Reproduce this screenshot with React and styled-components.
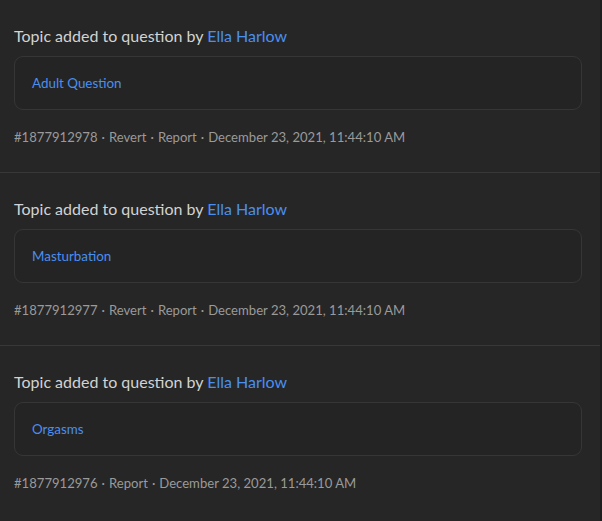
import React from "react";
import styled, { createGlobalStyle } from "styled-components";

const GlobalStyle = createGlobalStyle`
  html, body {
    margin: 0;
    padding: 0;
    background: #262626;
  }
  body {
    font-family: Lato, "Noto Sans", sans-serif;
    -webkit-font-smoothing: antialiased;
  }
`;

const logs = [
  { id: "1877912978", topic: "Adult Question", canRevert: true },
  { id: "1877912977", topic: "Masturbation", canRevert: true },
  { id: "1877912976", topic: "Orgasms", canRevert: false },
];

const DATE = "December 23, 2021, 11:44:10 AM";

export default function App() {
  return (
    <>
      <GlobalStyle />
      <Page>
        <List>
          {logs.map((log, i) => (
            <Entry key={log.id} last={i === logs.length - 1}>
              <Heading>
                Topic added to question by <UserLink href="#">Ella Harlow</UserLink>
              </Heading>
              <TopicCard>
                <TopicLink href="#">{log.topic}</TopicLink>
              </TopicCard>
              <Meta>
                #{log.id}
                {log.canRevert && (
                  <>
                    <Dot>·</Dot>
                    <MetaLink href="#">Revert</MetaLink>
                  </>
                )}
                <Dot>·</Dot>
                <MetaLink href="#">Report</MetaLink>
                <Dot>·</Dot>
                {DATE}
              </Meta>
            </Entry>
          ))}
        </List>
        <Edge />
      </Page>
    </>
  );
}

const Page = styled.div`
  display: flex;
  width: 602px;
  height: 521px;
  overflow: hidden;
  background: #262626;
`;

const List = styled.div`
  flex: 1;
  display: flex;
  flex-direction: column;
`;

const Edge = styled.div`
  width: 2px;
  background: #1e1e1e;
`;

const Entry = styled.div`
  padding: 25px 18px 25px 14px;
  border-bottom: ${({ last }) => (last ? "none" : "1px solid #383838")};
`;

const Heading = styled.div`
  font-size: 16px;
  line-height: 22px;
  color: #d2d3d3;
`;

const UserLink = styled.a`
  color: #4a8fef;
  text-decoration: none;
`;

const TopicCard = styled.div`
  margin-top: 9px;
  height: 52px;
  display: flex;
  align-items: center;
  padding: 0 17px;
  border: 1px solid #363636;
  border-radius: 9px;
  background: #242424;
`;

const TopicLink = styled.a`
  font-size: 13.4px;
  color: #4a8fef;
  text-decoration: none;
`;

const Meta = styled.div`
  margin-top: 17px;
  font-size: 13.1px;
  line-height: 20px;
  color: #9a9a9a;
`;

const Dot = styled.span`
  margin: 0 4px;
`;

const MetaLink = styled.a`
  color: #9a9a9a;
  text-decoration: none;
`;
